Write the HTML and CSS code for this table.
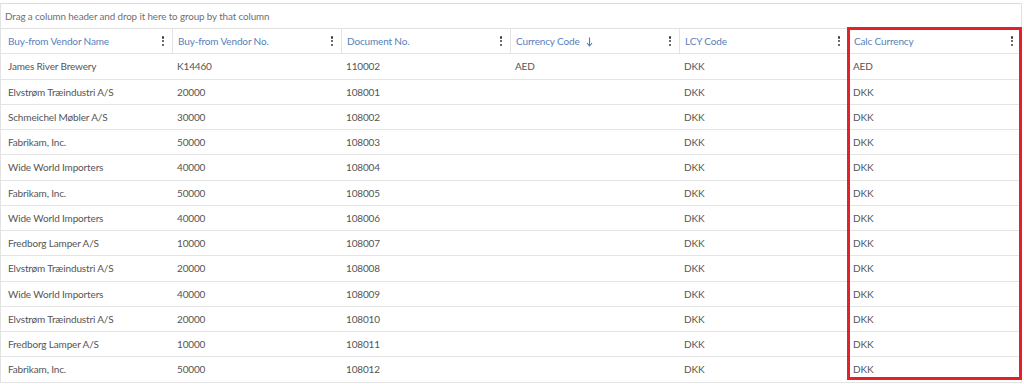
FILE: index.html
```html
<!DOCTYPE html>
<html>
<head>
<meta charset="utf-8">
<link rel="stylesheet" href="styles.css">
</head>
<body>
<div class="grid-wrap">
  <div class="group-panel">Drag a column header and drop it here to group by that column</div>
  <div class="table">
    <div class="row head">
      <div class="cell"><span>Buy-from Vendor Name</span><span class="kebab"><i></i><i></i><i></i></span></div>
      <div class="cell"><span>Buy-from Vendor No.</span><span class="kebab"><i></i><i></i><i></i></span></div>
      <div class="cell"><span>Document No.</span><span class="kebab"><i></i><i></i><i></i></span></div>
      <div class="cell"><span class="sorted">Currency Code <svg class="sort" width="7" height="10" viewBox="0 0 7 10"><path d="M3.5 0.5V8.5M1 6l2.5 3L6 6" fill="none" stroke="currentColor" stroke-width="1.1"/></svg></span><span class="kebab"><i></i><i></i><i></i></span></div>
      <div class="cell"><span>LCY Code</span><span class="kebab"><i></i><i></i><i></i></span></div>
      <div class="cell"><span>Calc Currency</span><span class="kebab"><i></i><i></i><i></i></span></div>
    </div>
    <div class="row"><div class="cell">James River Brewery</div><div class="cell">K14460</div><div class="cell">110002</div><div class="cell">AED</div><div class="cell">DKK</div><div class="cell">AED</div></div>
    <div class="row"><div class="cell">Elvstrøm Træindustri A/S</div><div class="cell">20000</div><div class="cell">108001</div><div class="cell"></div><div class="cell">DKK</div><div class="cell">DKK</div></div>
    <div class="row"><div class="cell">Schmeichel Møbler A/S</div><div class="cell">30000</div><div class="cell">108002</div><div class="cell"></div><div class="cell">DKK</div><div class="cell">DKK</div></div>
    <div class="row"><div class="cell">Fabrikam, Inc.</div><div class="cell">50000</div><div class="cell">108003</div><div class="cell"></div><div class="cell">DKK</div><div class="cell">DKK</div></div>
    <div class="row"><div class="cell">Wide World Importers</div><div class="cell">40000</div><div class="cell">108004</div><div class="cell"></div><div class="cell">DKK</div><div class="cell">DKK</div></div>
    <div class="row"><div class="cell">Fabrikam, Inc.</div><div class="cell">50000</div><div class="cell">108005</div><div class="cell"></div><div class="cell">DKK</div><div class="cell">DKK</div></div>
    <div class="row"><div class="cell">Wide World Importers</div><div class="cell">40000</div><div class="cell">108006</div><div class="cell"></div><div class="cell">DKK</div><div class="cell">DKK</div></div>
    <div class="row"><div class="cell">Fredborg Lamper A/S</div><div class="cell">10000</div><div class="cell">108007</div><div class="cell"></div><div class="cell">DKK</div><div class="cell">DKK</div></div>
    <div class="row"><div class="cell">Elvstrøm Træindustri A/S</div><div class="cell">20000</div><div class="cell">108008</div><div class="cell"></div><div class="cell">DKK</div><div class="cell">DKK</div></div>
    <div class="row"><div class="cell">Wide World Importers</div><div class="cell">40000</div><div class="cell">108009</div><div class="cell"></div><div class="cell">DKK</div><div class="cell">DKK</div></div>
    <div class="row"><div class="cell">Elvstrøm Træindustri A/S</div><div class="cell">20000</div><div class="cell">108010</div><div class="cell"></div><div class="cell">DKK</div><div class="cell">DKK</div></div>
    <div class="row"><div class="cell">Fredborg Lamper A/S</div><div class="cell">10000</div><div class="cell">108011</div><div class="cell"></div><div class="cell">DKK</div><div class="cell">DKK</div></div>
    <div class="row"><div class="cell">Fabrikam, Inc.</div><div class="cell">50000</div><div class="cell">108012</div><div class="cell"></div><div class="cell">DKK</div><div class="cell">DKK</div></div>
  </div>
  <div class="highlight"></div>
</div>
</body>
</html>
```

FILE: styles.css
```css
html, body {
  margin: 0;
  padding: 0;
  background: #ffffff;
  overflow: hidden;
}
body {
  font-family: Lato, "Open Sans", sans-serif;
  font-size: 10px;
  letter-spacing: -0.15px;
  color: #555555;
  padding-top: 3px;
}
.grid-wrap {
  position: relative;
  width: 1022px;
  border-left: 1px solid #e2e2e2;
  border-right: 1px solid #e2e2e2;
  box-sizing: border-box;
}
.group-panel {
  border-top: 1px solid #dcdcdc;
  height: 24px;
  line-height: 25px;
  padding-left: 4px;
  color: #707070;
  font-size: 9.8px;
  letter-spacing: -0.1px;
}
.table {
  border-top: 1px solid #e0e0e0;
}
.row {
  display: grid;
  grid-template-columns: 171px 169px 169px 169px 169px 1fr;
  height: 25.25px;
  box-sizing: border-box;
  border-bottom: 1px solid #e4e4e4;
}
.cell {
  display: flex;
  align-items: center;
  padding-left: 7px;
  padding-right: 8px;
  white-space: nowrap;
  overflow: hidden;
}
.cell + .cell {
  padding-left: 5px;
}
.head .cell {
  justify-content: space-between;
  color: #5581bc;
}
.head .cell + .cell {
  border-left: 1px solid #e4e4e4;
}
.sorted {
  display: flex;
  align-items: center;
  gap: 6px;
}
.sort {
  color: #4d7ab8;
  margin-top: 1px;
}
.kebab {
  display: flex;
  flex-direction: column;
  gap: 1.5px;
}
.kebab i {
  display: block;
  width: 2.2px;
  height: 2.2px;
  border-radius: 1.1px;
  background: #3c3c3c;
}
.highlight {
  position: absolute;
  left: 846px;
  top: 24px;
  width: 175px;
  height: 353px;
  box-sizing: border-box;
  border: 3px solid #e3212b;
  pointer-events: none;
}
```
